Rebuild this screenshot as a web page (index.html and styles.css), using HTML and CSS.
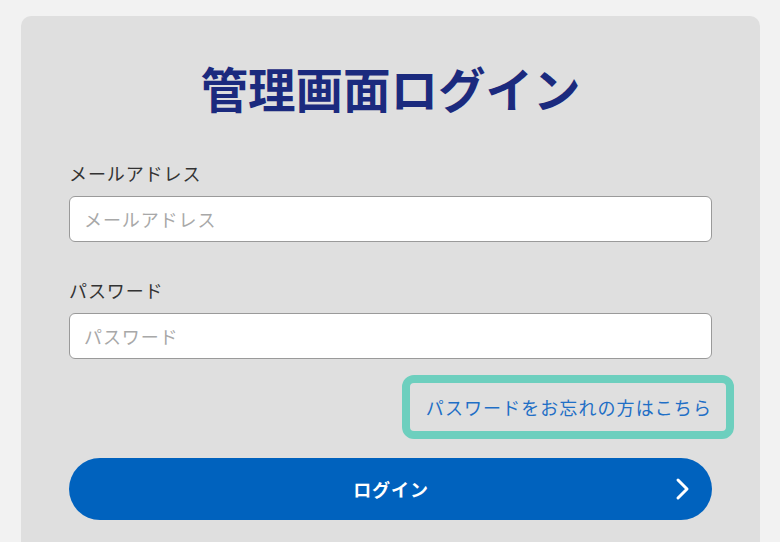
FILE: index.html
```html
<!DOCTYPE html>
<html lang="ja">
<head>
<meta charset="utf-8">
<title>管理画面ログイン</title>
<link rel="stylesheet" href="styles.css">
</head>
<body>
<main class="card">
  <h1 class="title">管理画面ログイン</h1>
  <form class="form">
    <label class="field">
      <span class="label">メールアドレス</span>
      <input class="input" type="email" placeholder="メールアドレス">
    </label>
    <label class="field field-second">
      <span class="label">パスワード</span>
      <input class="input" type="password" placeholder="パスワード">
    </label>
    <div class="forgot-row">
      <a class="forgot" href="#">パスワードをお忘れの方はこちら</a>
    </div>
    <button class="submit" type="button">
      <span class="submit-spacer"></span>
      <span class="submit-text">ログイン</span>
      <svg class="chevron" width="16" height="24" viewBox="0 0 16 24" aria-hidden="true">
        <path d="M3 3 L12 12 L3 21" fill="none" stroke="#fff" stroke-width="3" stroke-linecap="round" stroke-linejoin="round"/>
      </svg>
    </button>
  </form>
</main>
</body>
</html>
```

FILE: styles.css
```css
* { box-sizing: border-box; }

html, body {
  margin: 0;
  height: 100%;
}

body {
  background: #f2f2f2;
  padding: 16px 20px 0 21px;
  font-family: "Noto Sans CJK JP", "Noto Sans", sans-serif;
  color: #333;
  overflow: hidden;
}

.card {
  background: #dfdfdf;
  border-radius: 10px 10px 0 0;
  padding: 48px 48px 0;
  height: 100%;
}

.title {
  margin: 0;
  font-size: 47.5px;
  line-height: 48px;
  font-weight: 700;
  color: #1b2a7e;
  text-align: center;
}

.form {
  display: flex;
  flex-direction: column;
  margin-top: 48px;
}

.field {
  display: flex;
  flex-direction: column;
  gap: 10px;
}

.field-second {
  margin-top: 35px;
}

.label {
  font-size: 18px;
  line-height: 26px;
  letter-spacing: 0.05em;
  color: #333;
}

.input {
  height: 46px;
  width: 100%;
  border: 1px solid #9a9a9a;
  border-radius: 6px;
  background: #fff;
  padding: 0 14px;
  font-family: inherit;
  font-size: 18px;
  letter-spacing: 0.05em;
  color: #333;
}

.input::placeholder {
  color: #a8a8a8;
}

.forgot-row {
  display: flex;
  justify-content: flex-end;
  margin-top: 36px;
}

.forgot {
  display: inline-block;
  font-size: 18px;
  line-height: 24px;
  letter-spacing: 0.06em;
  color: #1f6fc6;
  text-decoration: none;
  padding: 12px 14px 12px 16px;
  margin: -12px -14px -12px -16px;
  border-radius: 4px;
  outline: 8px solid #6dcfbe;
}

.submit {
  margin-top: 39px;
  height: 62px;
  width: 100%;
  flex-shrink: 0;
  border: none;
  border-radius: 31px;
  background: #0062be;
  color: #fff;
  font-family: inherit;
  display: grid;
  grid-template-columns: 1fr auto 1fr;
  align-items: center;
  padding: 0 21px 0 22px;
}

.submit-text {
  font-size: 18px;
  font-weight: 700;
  letter-spacing: 0.05em;
  line-height: 24px;
}

.chevron {
  justify-self: end;
  display: block;
}
```
